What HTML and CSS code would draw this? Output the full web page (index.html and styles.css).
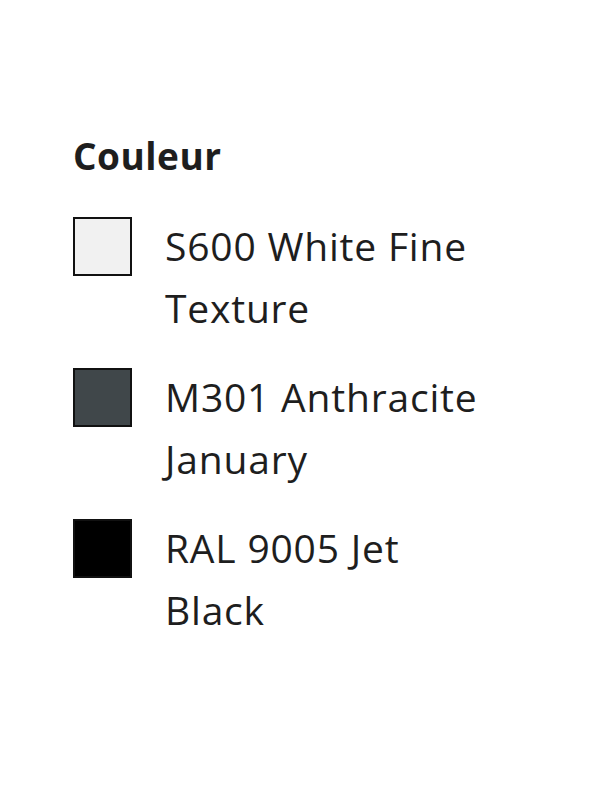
FILE: index.html
```html
<!DOCTYPE html>
<html>
<head>
    <title>Couleur</title>
    <link rel="stylesheet" href="styles.css">
</head>

<body>
    <div class="colour-picker">
        <h3 class="picker-title">Couleur</h3>

        <ul class="swatch-list">
            <li class="swatch-item">
                <span class="swatch swatch-white"></span>
                <span class="swatch-name">S600 White Fine Texture</span>
            </li>
            <li class="swatch-item">
                <span class="swatch swatch-anthracite"></span>
                <span class="swatch-name">M301 Anthracite January</span>
            </li>
            <li class="swatch-item">
                <span class="swatch swatch-black"></span>
                <span class="swatch-name">RAL 9005 Jet Black</span>
            </li>
        </ul>
    </div>
</body>

</html>
```

FILE: styles.css
```css
body {
    margin: 0;
    background: #ffffff;
    font-family: "Open Sans", "Liberation Sans", sans-serif;
    color: #1e1e1e;
}

.colour-picker {
    padding: 134px 0 0 73px;
}

.picker-title {
    margin: 0 0 39px 0;
    font-size: 37px;
    font-weight: 700;
    line-height: 44px;
    letter-spacing: 0.5px;
}

.swatch-list {
    list-style: none;
    margin: 0;
    padding: 0;
    display: flex;
    flex-direction: column;
    gap: 29px;
}

.swatch-item {
    display: flex;
    align-items: flex-start;
    gap: 33px;
}

.swatch {
    flex: none;
    width: 55px;
    height: 55px;
    border: 2px solid #111111;
}

.swatch-white {
    background: #f1f1f1;
}

.swatch-anthracite {
    background: #40474a;
}

.swatch-black {
    background: #000000;
}

.swatch-name {
    width: 320px;
    font-size: 39px;
    line-height: 62px;
    letter-spacing: 0.8px;
    margin-top: -2px;
}
```
